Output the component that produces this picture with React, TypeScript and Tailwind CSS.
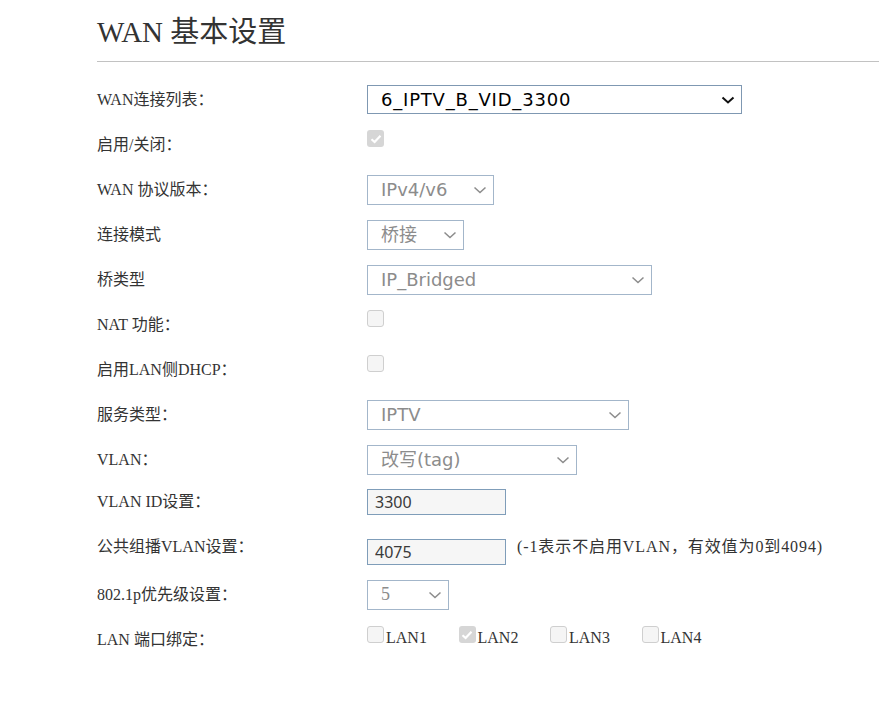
import React from 'react';

const serif = "font-['Liberation_Serif','Noto_Sans_CJK_SC',serif]";
const sans = "font-['DejaVu_Sans','Noto_Sans_CJK_SC',sans-serif]";

function Chevron({ dark }: { dark?: boolean }) {
  return (
    <svg
      width="14"
      height="8"
      viewBox="0 0 14 8"
      className="pointer-events-none absolute right-[7px] top-1/2 -translate-y-1/2"
    >
      <path
        d="M1.5 1.5 L7 6.5 L12.5 1.5"
        fill="none"
        stroke={dark ? '#111' : '#8c8c8c'}
        strokeWidth={dark ? 2 : 1.5}
      />
    </svg>
  );
}

function Select({
  value,
  className,
  active,
  fontClass,
}: {
  value: string;
  className: string;
  active?: boolean;
  fontClass?: string;
}) {
  return (
    <div className={`relative ${className}`}>
      <select
        disabled={!active}
        defaultValue={value}
        className={`h-full w-full appearance-none bg-white pl-[13px] pr-6 outline-none ${fontClass ?? sans} ${
          active
            ? 'border border-[#7f98b2] text-[18px] tracking-[0.8px] text-black'
            : 'border border-[#a3b6ca] text-[18px] text-[#8c8c8c]'
        }`}
      >
        <option>{value}</option>
      </select>
      <Chevron dark={active} />
    </div>
  );
}

function Check({ checked }: { checked?: boolean }) {
  return checked ? (
    <span className="flex h-[17px] w-[17px] items-center justify-center rounded-[3px] bg-[#d6d6d6]">
      <svg width="12" height="10" viewBox="0 0 12 10">
        <path d="M1.5 5.2 L4.6 8 L10.5 1.8" fill="none" stroke="#fff" strokeWidth="2.2" />
      </svg>
    </span>
  ) : (
    <span className="block h-[17px] w-[17px] rounded-[3px] border border-[#cfcfcf] bg-[#f5f5f5]" />
  );
}

function Row({
  label,
  className,
  children,
}: {
  label: string;
  className?: string;
  children: React.ReactNode;
}) {
  return (
    <div className={`grid grid-cols-[270px_1fr] items-center ${className ?? 'h-[45px]'}`}>
      <div className={`${serif} text-[16px] text-[#333]`}>{label}</div>
      <div className="flex items-center">{children}</div>
    </div>
  );
}

function TextBox({ value, className }: { value: string; className?: string }) {
  return (
    <input
      defaultValue={value}
      className={`h-[26px] w-[139px] border border-[#7f9db9] bg-[#f6f6f6] pl-[7px] text-[16px] text-[#3a3a3a] outline-none font-['Noto_Sans','Noto_Sans_CJK_SC',sans-serif] ${className ?? ''}`}
    />
  );
}

export default function App() {
  const lans = [
    { name: 'LAN1', on: false },
    { name: 'LAN2', on: true },
    { name: 'LAN3', on: false },
    { name: 'LAN4', on: false },
  ];

  return (
    <div className="min-h-screen bg-white pl-[97px]">
      <h1 className={`${serif} pt-[14px] text-[29px] leading-[36px] text-[#333]`}>WAN 基本设置</h1>
      <div className="mt-[11px] h-px bg-[#c2c2c2]" />

      <div className="mt-[15px]">
        <Row label="WAN连接列表：">
          <Select value="6_IPTV_B_VID_3300" active className="h-[29px] w-[375px]" />
        </Row>
        <Row label="启用/关闭：">
          <div className="mb-[12px]">
            <Check checked />
          </div>
        </Row>
        <Row label="WAN 协议版本：">
          <Select value="IPv4/v6" className="h-[30px] w-[127px]" />
        </Row>
        <Row label="连接模式">
          <Select value="桥接" className="h-[30px] w-[97px]" />
        </Row>
        <Row label="桥类型">
          <Select value="IP_Bridged" className="h-[30px] w-[285px]" />
        </Row>
        <Row label="NAT 功能：">
          <div className="mb-[12px]">
            <Check />
          </div>
        </Row>
        <Row label="启用LAN侧DHCP：">
          <div className="mb-[12px]">
            <Check />
          </div>
        </Row>
        <Row label="服务类型：">
          <Select value="IPTV" className="h-[30px] w-[262px]" />
        </Row>
        <Row label="VLAN：">
          <Select value="改写(tag)" className="h-[30px] w-[210px]" />
        </Row>
        <Row label="VLAN ID设置：" className="h-[40px]">
          <TextBox value="3300" />
        </Row>
        <Row label="公共组播VLAN设置：" className="h-[50px]">
          <TextBox value="4075" className="mt-[10px]" />
          <span className={`${serif} ml-[11px] text-[16px] tracking-[0.9px] text-[#333]`}>
            (-1表示不启用VLAN，有效值为0到4094)
          </span>
        </Row>
        <Row label="802.1p优先级设置：">
          <Select value="5" fontClass={serif} className="h-[30px] w-[82px]" />
        </Row>
        <Row label="LAN 端口绑定：">
          <div className="mb-[7px] flex">
            {lans.map((l) => (
              <div key={l.name} className="flex w-[91.5px] items-end">
                <div className="mb-[3px]">
                  <Check checked={l.on} />
                </div>
                <span className={`${serif} ml-[2px] text-[16px] leading-[16px] text-[#333]`}>{l.name}</span>
              </div>
            ))}
          </div>
        </Row>
      </div>
    </div>
  );
}
